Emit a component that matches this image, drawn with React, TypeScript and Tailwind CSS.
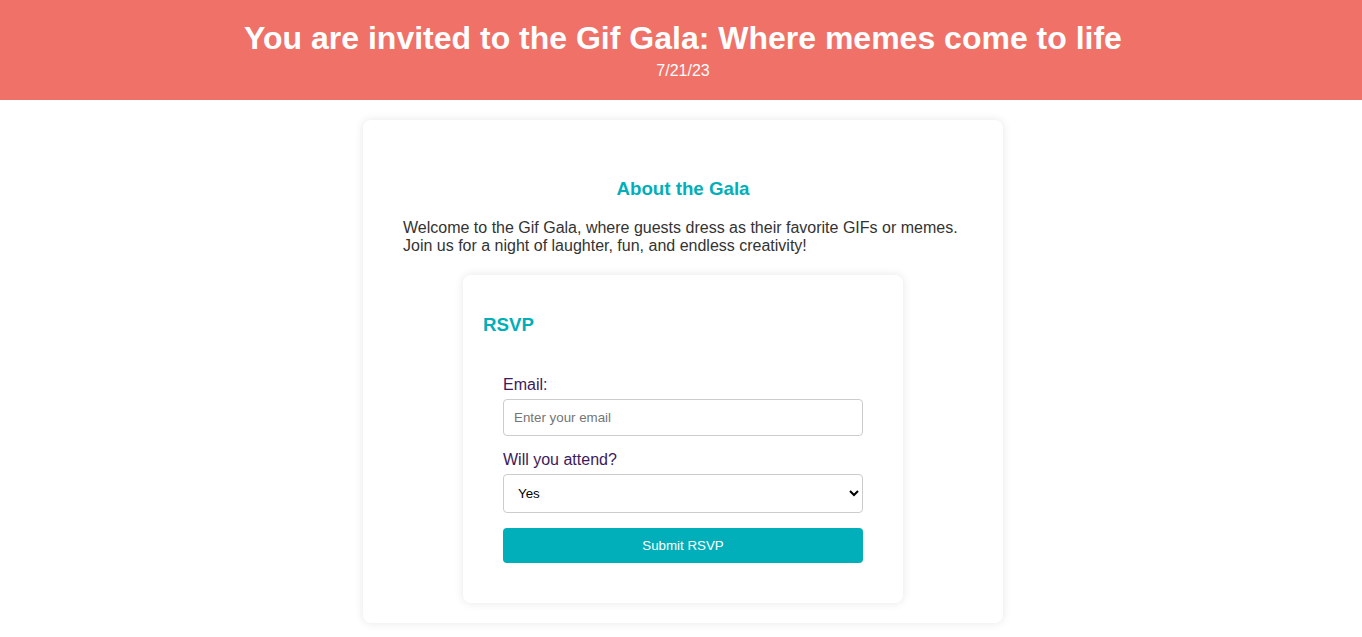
export default function App() {
  return (
    <div className="min-h-screen bg-white font-['Liberation_Sans',Arial,sans-serif] text-[#333]">
      {/* Header */}
      <header className="h-[100px] bg-[#f07167] text-white text-center pt-[20px] pl-1">
        <h1 className="text-[32px] font-bold leading-[37px]">
          You are invited to the Gif Gala: Where memes come to life
        </h1>
        <p className="text-base leading-[18px] mt-[5px]">7/21/23</p>
      </header>

      <main className="flex justify-center pt-5 pl-1">
        <div className="w-[640px] bg-white rounded-lg shadow-[0_0_10px_rgba(0,0,0,0.1)] px-10 pt-10 pb-5">
          {/* About */}
          <section>
            <h3 className="text-center text-[18.72px] font-bold text-[#00afb9] leading-[22px] mt-[18px] mb-[19px]">
              About the Gala
            </h3>
            <p className="text-base leading-[18px]">
              Welcome to the Gif Gala, where guests dress as their favorite GIFs or memes. Join us for a night of
              laughter, fun, and endless creativity!
            </p>
          </section>

          {/* RSVP card */}
          <div className="mx-auto mt-[20px] w-[440px] bg-white rounded-lg shadow-[0_0_10px_rgba(0,0,0,0.1)] p-5">
            <h3 className="text-[18.72px] font-bold text-[#00afb9] leading-[22px] mt-[19px] mb-[19px]">RSVP</h3>
            <form className="px-5 pt-[21px] pb-[20px] flex flex-col" onSubmit={(e) => e.preventDefault()}>
              <label htmlFor="email" className="text-base leading-[18px] text-[#3c1a5b] mb-[5px]">
                Email:
              </label>
              <input
                id="email"
                type="email"
                placeholder="Enter your email"
                className="h-[37px] px-[10px] text-[13.33px] border border-[#ccc] rounded-[4px] placeholder:text-[#757575] outline-none"
              />
              <label htmlFor="attend" className="text-base leading-[18px] text-[#3c1a5b] mt-[15px] mb-[5px]">
                Will you attend?
              </label>
              <select
                id="attend"
                defaultValue="yes"
                className="h-[39px] px-[10px] text-[13.33px] text-black border border-[#ccc] rounded-[4px] bg-white"
              >
                <option value="yes">Yes</option>
                <option value="no">No</option>
                <option value="maybe">Maybe</option>
              </select>
              <button
                type="submit"
                className="mt-[15px] h-[35px] bg-[#00afb9] text-white text-[13.33px] rounded-[4px]"
              >
                Submit RSVP
              </button>
            </form>
          </div>
        </div>
      </main>
    </div>
  );
}
